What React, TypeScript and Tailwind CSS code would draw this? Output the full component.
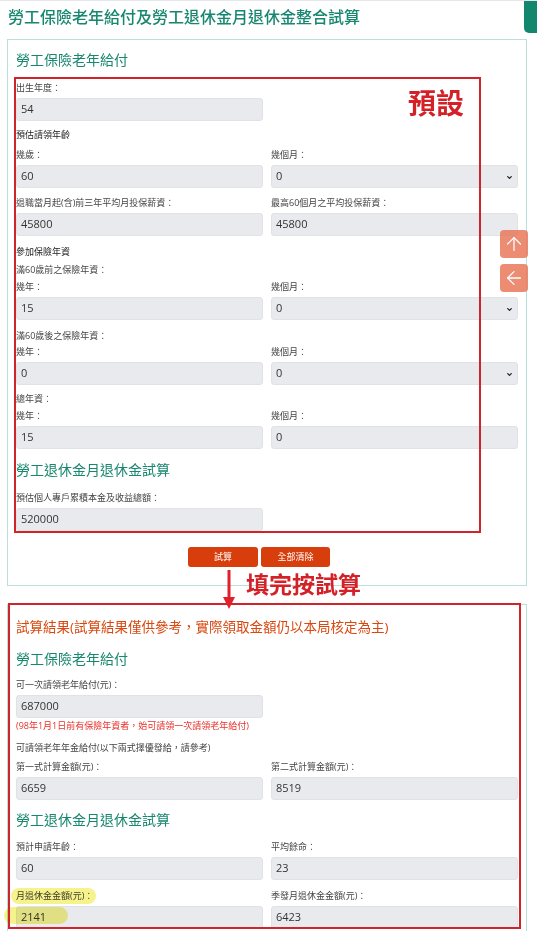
import { ChevronDown, ArrowUp, ArrowLeft } from 'lucide-react'

type FieldProps = {
  label: string
  value: string
  select?: boolean
  className?: string
}

function Field({ label, value, select, className = '' }: FieldProps) {
  return (
    <div className={className}>
      <div className="h-4 leading-4 text-[9px] text-[#444] mb-[2px] whitespace-nowrap">{label}</div>
      <div className="relative h-[23px] rounded-[3px] bg-[#e9eaed] border border-[#e0e2e6] flex items-center px-[4px] text-[11px] text-[#333]">
        {value}
        {select && <ChevronDown className="absolute right-[4px] top-[8px] w-[7px] h-[7px] text-[#222]" strokeWidth={4.5} />}
      </div>
    </div>
  )
}

function Row({ children, className = '' }: { children: React.ReactNode; className?: string }) {
  return <div className={`grid grid-cols-2 gap-x-2 ${className}`}>{children}</div>
}

function GroupLabel({ children, className = '' }: { children: React.ReactNode; className?: string }) {
  return <div className={`h-4 leading-4 text-[9px] text-[#222] ${className}`}>{children}</div>
}

function SubLabel({ children, className = '' }: { children: React.ReactNode; className?: string }) {
  return <div className={`h-4 leading-4 text-[9px] text-[#444] ${className}`}>{children}</div>
}

function Heading({ children, className = '' }: { children: React.ReactNode; className?: string }) {
  return <h2 className={`h-5 leading-5 text-[14px] text-[#17876f] ${className}`}>{children}</h2>
}

export default function App() {
  return (
    <div className="relative w-[537px] h-[931px] overflow-hidden bg-white border-t border-[#e5e7eb] font-['Open_Sans','Noto_Sans_CJK_TC',sans-serif]">
      <h1 className="pt-[4px] pb-[10px] pl-2 text-[16px] leading-6 font-medium text-[#17876f]">
        勞工保險老年給付及勞工退休金月退休金整合試算
      </h1>

      {/* 勞保老年給付 + 勞退 輸入區 */}
      <section className="relative ml-[7px] w-[520px] border border-[#b9e0da] pt-[10px] pl-2 pr-[8px] pb-[18px]">
        <Heading>勞工保險老年給付</Heading>
        <Field className="mt-[10px] w-[247px]" label="出生年度：" value="54" />

        <GroupLabel className="mt-[6px]">預估請領年齡</GroupLabel>
        <Row className="mt-[4px]">
          <Field label="幾歲：" value="60" />
          <Field label="幾個月：" value="0" select />
        </Row>
        <Row className="mt-[7px]">
          <Field label="退職當月起(含)前三年平均月投保薪資：" value="45800" />
          <Field label="最高60個月之平均投保薪資：" value="45800" />
        </Row>

        <GroupLabel className="mt-[8px]">參加保險年資</GroupLabel>
        <SubLabel className="mt-[2px]">滿60歲前之保險年資：</SubLabel>
        <Row className="mt-[1px]">
          <Field label="幾年：" value="15" />
          <Field label="幾個月：" value="0" select />
        </Row>
        <SubLabel className="mt-[8px]">滿60歲後之保險年資：</SubLabel>
        <Row>
          <Field label="幾年：" value="0" />
          <Field label="幾個月：" value="0" select />
        </Row>
        <SubLabel className="mt-[6px]">總年資：</SubLabel>
        <Row className="mt-[1px]">
          <Field label="幾年：" value="15" />
          <Field label="幾個月：" value="0" />
        </Row>

        <Heading className="mt-[11px]">勞工退休金月退休金試算</Heading>
        <Field className="mt-[10px] w-[247px]" label="預估個人專戶累積本金及收益總額：" value="520000" />

        <div className="mt-[16px] flex justify-center gap-[3px] pr-[16px]">
          <button className="w-[70px] h-5 rounded-[3px] bg-[#d83d0c] text-white text-[9px]">試算</button>
          <button className="w-[69px] h-5 rounded-[3px] bg-[#d83d0c] text-white text-[9px]">全部清除</button>
        </div>

        {/* 預設值標示框 */}
        <div className="absolute left-[6px] top-[37px] w-[467px] h-[456px] border-2 border-[#d0232a] pointer-events-none" />
        <div className="absolute left-[400px] top-[47px] text-[28px] leading-[32px] font-bold text-[#d42128]">預設</div>
      </section>

      {/* 試算結果 */}
      <section className="relative ml-[7px] mt-[18px] w-[520px] border border-[#b9e0da] pt-[12px] pl-2 pr-[8px] pb-10">
        <div className="h-5 leading-5 text-[13.5px] text-[#d9480f]">
          試算結果(試算結果僅供參考，實際領取金額仍以本局核定為主)
        </div>
        <Heading className="mt-[12px]">勞工保險老年給付</Heading>
        <Field className="mt-[8px] w-[247px]" label="可一次請領老年給付(元)：" value="687000" />
        <div className="h-4 leading-4 text-[9px] text-[#e8302b]">
          (98年1月1日前有保險年資者，始可請領一次請領老年給付)
        </div>
        <SubLabel className="mt-[6px]">可請領老年年金給付(以下兩式擇優發給，請參考)</SubLabel>
        <Row className="mt-[3px]">
          <Field label="第一式計算金額(元)：" value="6659" />
          <Field label="第二式計算金額(元)：" value="8519" />
        </Row>

        <Heading className="mt-[10px]">勞工退休金月退休金試算</Heading>
        <Row className="mt-[9px]">
          <Field label="預計申請年齡：" value="60" />
          <Field label="平均餘命：" value="23" />
        </Row>
        <Row className="mt-[8px]">
          <Field label="月退休金金額(元)：" value="2141" />
          <Field label="季發月退休金金額(元)：" value="6423" />
        </Row>

        {/* 螢光筆標記 */}
        <div className="absolute left-[3px] top-[283px] w-[85px] h-[16px] rounded-full bg-[#f2ee5e] opacity-70 mix-blend-multiply" />
        <div className="absolute left-[-4px] top-[302px] w-[64px] h-[17px] rounded-full bg-[#f2ee5e] opacity-70 mix-blend-multiply" />

        <div className="absolute left-[0px] top-[-2px] w-[513px] h-[326px] border-2 border-[#d0232a] pointer-events-none" />
      </section>

      {/* 操作提示 */}
      <svg className="absolute left-[223px] top-[569px]" width="12" height="40" viewBox="0 0 12 40">
        <line x1="6" y1="0" x2="6" y2="30" stroke="#e0202a" strokeWidth="3" />
        <path d="M0 27 L12 27 L6 39 Z" fill="#e0202a" />
      </svg>
      <div className="absolute left-[246px] top-[568px] text-[23px] leading-[30px] font-bold text-[#d42128]">填完按試算</div>

      {/* 浮動按鈕 */}
      <div className="absolute left-[500px] top-[229px] w-[28px] h-[28px] rounded-[4px] bg-[#e8785a]/85 flex items-center justify-center">
        <ArrowUp className="w-[22px] h-[22px] text-white" strokeWidth={1.4} />
      </div>
      <div className="absolute left-[500px] top-[263px] w-[28px] h-[28px] rounded-[4px] bg-[#e8785a]/85 flex items-center justify-center">
        <ArrowLeft className="w-[22px] h-[22px] text-white" strokeWidth={1.4} />
      </div>
      <div className="absolute right-0 top-0 w-[13px] h-[32px] rounded-bl-[5px] bg-[#12876d]" />
    </div>
  )
}
